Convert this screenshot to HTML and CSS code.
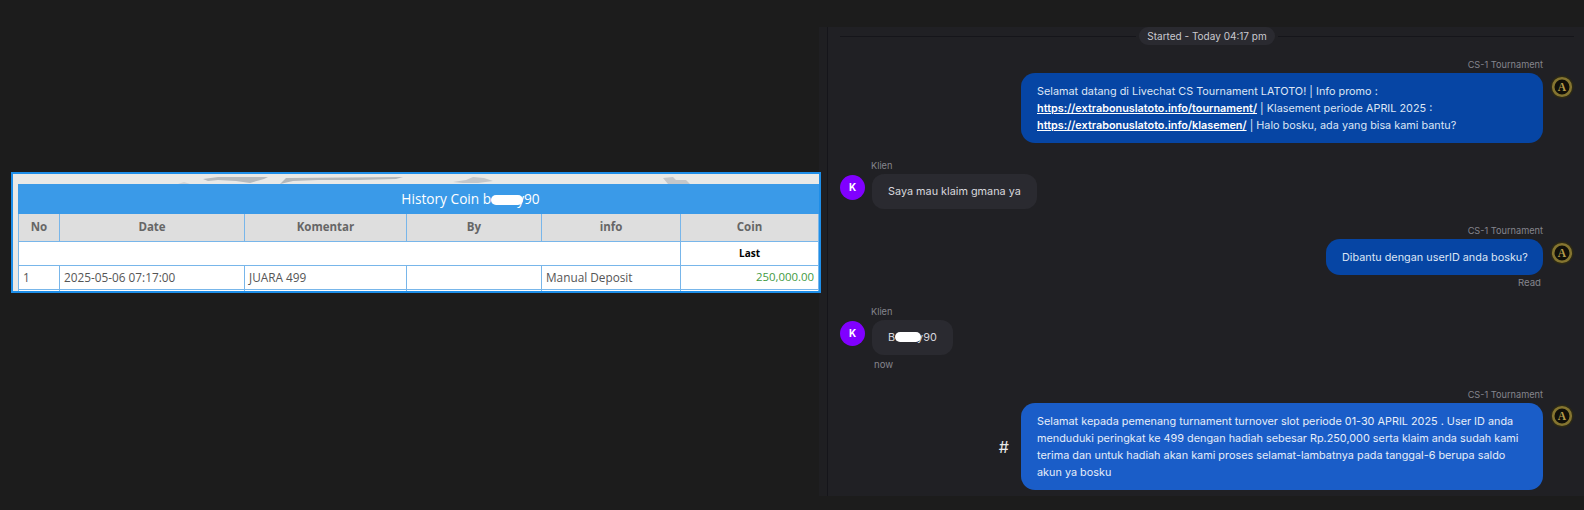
FILE: index.html

```html
<!DOCTYPE html>
<html lang="id">
<head>
  <meta charset="UTF-8">
  <title>History Coin</title>
  <link rel="stylesheet" href="styles.css">
</head>
<body>
  <div class="left">
    <div class="history">
      <svg class="map" viewBox="0 0 801 9" preserveAspectRatio="none">
        <path d="M160 9 L166 7 L172 9 Z" fill="#d2d4d6"/>
        <path d="M185 4 L200 2 L250 2 L246 4 L232 8 L218 6 L200 5 L190 6 Z" fill="#b6babd"/>
        <path d="M262 9 L268 3 L385 2 L378 4 L340 5 L300 5 L275 6 Z" fill="#b3b7ba"/>
        <path d="M435 7 L448 5 L455 2 L466 3 L475 6 L460 8 L445 8 Z" fill="#c4c7ca"/>
        <path d="M645 3 L655 2 L658 5 L668 5 L672 9 L650 9 Z" fill="#c4c7ca"/>
      </svg>
      <table class="coin-table">
        <colgroup>
          <col class="c-no"><col class="c-date"><col class="c-kom"><col class="c-by"><col class="c-info"><col class="c-coin">
        </colgroup>
        <tr>
          <th class="title" colspan="6">History Coin b<span class="blob blob-title"></span>y90</th>
        </tr>
        <tr class="head">
          <th>No</th><th>Date</th><th>Komentar</th><th>By</th><th>info</th><th>Coin</th>
        </tr>
        <tr class="last-row">
          <td colspan="5"></td>
          <td class="last">Last</td>
        </tr>
        <tr class="data">
          <td>1</td>
          <td>2025-05-06 07:17:00</td>
          <td>JUARA 499</td>
          <td></td>
          <td>Manual Deposit</td>
          <td class="amount">250,000.00</td>
        </tr>
        <tr class="tail"><td></td><td></td><td></td><td></td><td></td><td></td></tr>
      </table>
    </div>
  </div>

  <div class="chat">
    <div class="chat-inner">
      <div class="started">
        <span class="line"></span>
        <span class="pill">Started - Today 04:17 pm</span>
        <span class="line"></span>
      </div>

      <div class="msg agent first">
        <div class="msg-body">
          <div class="name">CS-1 Tournament</div>
          <div class="bubble dark wide">
            Selamat datang di Livechat CS Tournament LATOTO! | Info promo :<br>
            <a href="#">https://extrabonuslatoto.info/tournament/</a> | Klasement periode APRIL 2025 :<br>
            <a href="#">https://extrabonuslatoto.info/klasemen/</a> | Halo bosku, ada yang bisa kami bantu?
          </div>
        </div>
        <svg class="logo" viewBox="0 0 24 24"><use href="#logo-a"/></svg>
      </div>

      <div class="msg client second">
        <div class="avatar">K</div>
        <div class="msg-body">
          <div class="name">Klien</div>
          <div class="bubble grey">Saya mau klaim gmana ya</div>
        </div>
      </div>

      <div class="msg agent third">
        <div class="msg-body">
          <div class="name">CS-1 Tournament</div>
          <div class="bubble dark short">Dibantu dengan userID anda bosku?</div>
          <div class="status">Read</div>
        </div>
        <svg class="logo" viewBox="0 0 24 24"><use href="#logo-a"/></svg>
      </div>

      <div class="msg client fourth">
        <div class="avatar">K</div>
        <div class="msg-body">
          <div class="name">Klien</div>
          <div class="bubble grey">B<span class="blob blob-chat"></span>y90</div>
          <div class="now">now</div>
        </div>
      </div>

      <div class="msg agent fifth">
        <div class="hash">#</div>
        <div class="msg-body">
          <div class="name">CS-1 Tournament</div>
          <div class="bubble bright wide">
            Selamat kepada pemenang turnament turnover slot periode 01-30 APRIL 2025 . User ID anda<br>
            menduduki peringkat ke 499 dengan hadiah sebesar Rp.250,000 serta klaim anda sudah kami<br>
            terima dan untuk hadiah akan kami proses selamat-lambatnya pada tanggal-6 berupa saldo<br>
            akun ya bosku
          </div>
        </div>
        <svg class="logo" viewBox="0 0 24 24"><use href="#logo-a"/></svg>
      </div>
    </div>
  </div>

  <svg class="defs" width="0" height="0">
    <defs>
      <g id="logo-a">
        <circle cx="12" cy="12" r="11.5" fill="#2c2916"/>
        <circle cx="12" cy="12" r="8.8" fill="#111009" stroke="#857530" stroke-width="2.6"/>
        <text x="12" y="16" text-anchor="middle" font-family="Liberation Serif, serif" font-weight="700" font-size="11.5" fill="#b59c4c">A</text>
      </g>
    </defs>
  </svg>
</body>
</html>
```

FILE: styles.css

```css
* {
  box-sizing: border-box;
}
body {
  margin: 0;
  height: 510px;
  overflow: hidden;
  display: flex;
  background-color: #1c1c1c;
  font-family: 'Inter', sans-serif;
}

/* left side, the history table */
.left {
  flex: none;
  width: 819px;
  padding: 172px 0 0 11px;
}
.history {
  position: relative;
  width: 810px;
  height: 121px;
  padding: 10px 0 0 5px;
  background: #e9e9e7;
  border: 2px solid #1e8ee8;
  overflow: hidden;
}
.map {
  position: absolute;
  top: 1px;
  left: 5px;
  width: 801px;
  height: 9px;
}
.coin-table {
  position: relative;
  width: 801px;
  table-layout: fixed;
  border-collapse: collapse;
  background: white;
  font-family: 'Open Sans', 'Noto Sans', sans-serif;
  font-size: 11.8px;
  color: #555;
}
.c-no { width: 41px; }
.c-date { width: 185px; }
.c-kom { width: 162px; }
.c-by { width: 135px; }
.c-info { width: 139px; }
.coin-table th, .coin-table td {
  border: 1px solid #78b6ea;
  padding: 0 4px 2px;
}
.coin-table .title {
  height: 29px;
  padding-left: 108px;
  background: #3a9ae8;
  border-color: #3a9ae8;
  color: white;
  font-size: 13.7px;
  font-weight: normal;
}
.blob {
  display: inline-block;
  position: relative;
  z-index: 1;
  background: white;
  border-radius: 8px;
}
.blob-title {
  width: 32px;
  height: 10px;
  margin-right: -6px;
  vertical-align: -1px;
}
.blob-chat {
  width: 26px;
  height: 10px;
  margin-right: -4px;
  vertical-align: -1px;
}
.head th {
  height: 28px;
  background: #dedede;
  color: #666;
  font-size: 11.5px;
  font-weight: 700;
}
.last-row td {
  height: 24px;
}
.coin-table .last {
  text-align: center;
  color: black;
  font-size: 10px;
  font-weight: 700;
}
.data td {
  height: 24px;
}
.coin-table .amount {
  text-align: right;
  font-size: 11.4px;
  color: #3f9a3f;
}
.tail td {
  height: 2px;
  padding: 0;
}

/* right side, the chat */
.chat {
  flex: 1;
  margin-top: 27px;
  height: 469px;
  padding-left: 8px;
  background: #1f1f22;
}
.chat-inner {
  height: 100%;
  padding-left: 12px;
  background: #202024;
  border-left: 1px solid #15151a;
  font-size: 10.85px;
  color: #e4e4ea;
}
.started {
  display: flex;
  align-items: center;
  gap: 3px;
  height: 18px;
  padding-right: 10px;
}
.line {
  flex: 1;
  height: 1px;
  background: #15151a;
}
.pill {
  padding: 0 8px;
  height: 18px;
  line-height: 18px;
  border-radius: 9px;
  background: #2a2a30;
  color: #c9c9cf;
  font-size: 10px;
  white-space: nowrap;
}
.msg {
  display: flex;
}
.msg.agent {
  justify-content: flex-end;
  padding-right: 10px;
}
.name {
  height: 14px;
  line-height: 12px;
  font-size: 9.2px;
  color: #85858d;
}
.agent .name {
  text-align: right;
}
.client .name {
  margin-left: -1px;
}
.bubble {
  line-height: 17px;
  padding: 9.5px 16px;
  white-space: nowrap;
}
.dark {
  background: #0645a4;
  color: #dde6f5;
  border-radius: 14px;
}
.bright {
  background: #1a5dc8;
  color: #e6edf9;
  border-radius: 14px;
}
.grey {
  height: 35px;
  padding-top: 9px;
  background: #2a2a30;
  color: #d8d8de;
  border-radius: 12px;
  width: fit-content;
}
.wide {
  width: 522px;
}
.short {
  margin-left: auto;
  width: 217px;
  height: 36px;
}
.bubble a {
  color: white;
  font-weight: 600;
}
.logo {
  flex: none;
  width: 24px;
  height: 24px;
  margin: 16px 0 0 7px;
}
.avatar {
  flex: none;
  width: 25px;
  height: 25px;
  margin: 15px 7px 0 0;
  border-radius: 50%;
  background: #8000ff;
  color: white;
  text-align: center;
  line-height: 25px;
  font-size: 10px;
  font-weight: 700;
}
.status {
  margin-top: 1px;
  padding-right: 2px;
  text-align: right;
  font-size: 9.6px;
  line-height: 14px;
  color: #85858d;
}
.now {
  margin-top: 3px;
  padding-left: 2px;
  font-size: 9.6px;
  line-height: 14px;
  color: #85858d;
}
.hash {
  align-self: center;
  margin: 14px 12px 0 0;
  font-size: 16px;
  color: #e8e8e8;
}
.first { margin-top: 14px; }
.second { margin-top: 17px; }
.third { margin-top: 16px; }
.fourth { margin-top: 16px; }
.fifth { margin-top: 17px; }
.fifth .logo { margin-top: 15px; }
.defs {
  position: absolute;
}
```
